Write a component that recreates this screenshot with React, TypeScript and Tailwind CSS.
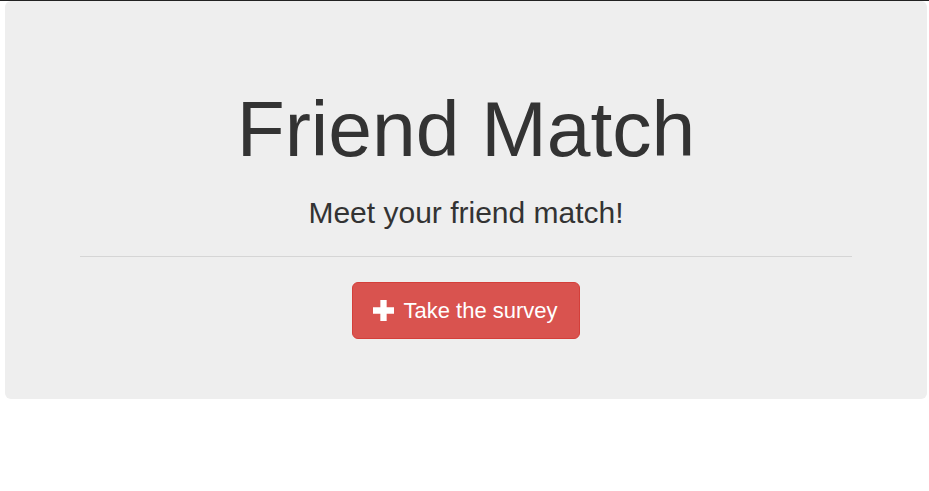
import React from "react";

export default function App() {
  return (
    <div className="min-h-screen bg-white" style={{ fontFamily: '"Liberation Sans", Arial, sans-serif' }}>
      <div className="h-px bg-[#222]" />
      <div className="ml-[5px] mr-[2px] rounded-[6px] bg-[#eeeeee] px-[75px] pt-[85px] pb-[60px] text-center text-[#333333]">
        <h1 className="text-[78.6px] leading-[87px] font-normal">Friend Match</h1>
        <h2 className="mt-[23px] text-[30px] leading-[33px] font-normal">Meet your friend match!</h2>
        <hr className="mt-[27px] border-0 border-t border-[#d5d5d5]" />
        <div className="mt-[25px] flex justify-center">
          <button className="flex h-[57px] items-center gap-[9px] rounded-[6px] border border-[#d43f3a] bg-[#d9534f] pl-[20px] pr-[21px] text-[22px] leading-[29px] text-white">
            <svg width="21" height="21" viewBox="0 0 20 20" className="shrink-0">
              <path d="M7 0h6v7h7v6h-7v7H7v-7H0V7h7z" fill="#ffffff" />
            </svg>
            <span>Take the survey</span>
          </button>
        </div>
      </div>
    </div>
  );
}
